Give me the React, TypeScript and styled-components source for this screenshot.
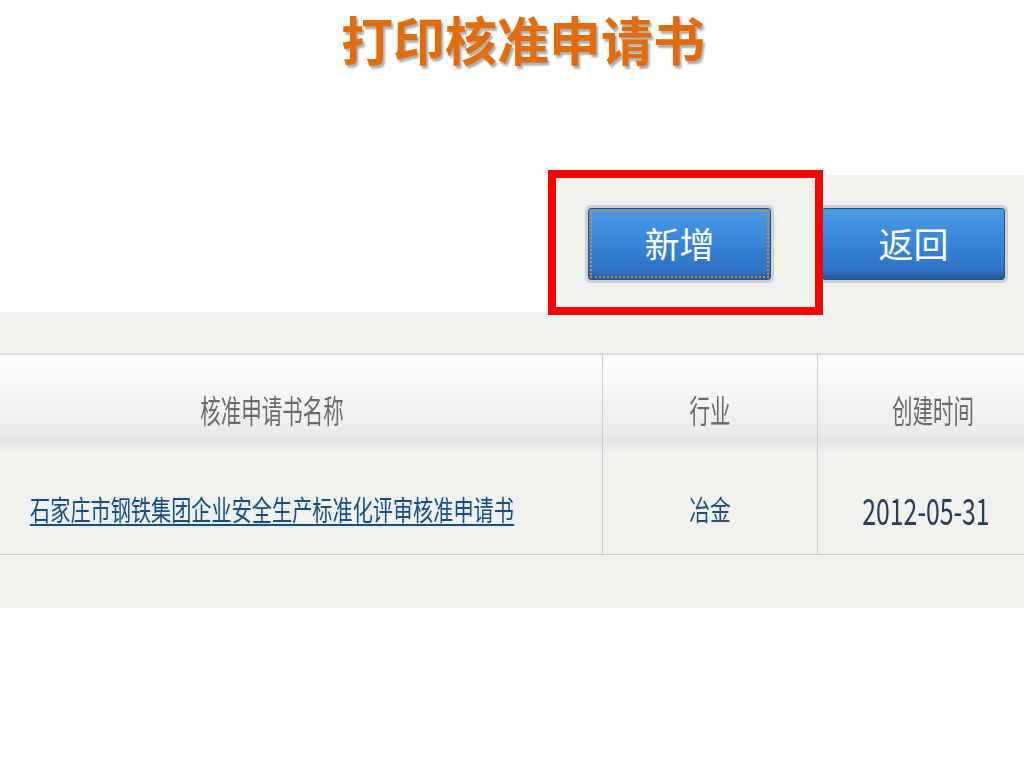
import React from "react";
import styled, { createGlobalStyle } from "styled-components";

const Global = createGlobalStyle`
  html, body { margin: 0; padding: 0; background: #ffffff; }
  body { width: 1024px; height: 768px; overflow: hidden; font-family: "Noto Sans CJK SC", "Noto Sans", sans-serif; }
`;

const Page = styled.div`
  width: 1024px;
  height: 768px;
  background: #ffffff;
  display: flex;
  flex-direction: column;
  overflow: hidden;
`;

const TitleBar = styled.div`
  height: 175px;
  display: flex;
  justify-content: center;
  align-items: flex-start;
  padding-left: 22px;
  box-sizing: border-box;
`;

const Title = styled.h1`
  margin: 0;
  padding-top: 4px;
  font-family: "Noto Sans CJK SC", sans-serif;
  font-size: 52px;
  font-weight: 700;
  line-height: 70px;
  color: #e36c0a;
  text-shadow: 2px 3px 2px rgba(110, 110, 110, 0.55);
  letter-spacing: 0;
`;

const ToolbarRow = styled.div`
  display: flex;
  justify-content: flex-end;
  height: 137px;
`;

const ToolbarPanel = styled.div`
  position: relative;
  width: 469px;
  background: #f1f1ee;
  display: flex;
  align-items: center;
  gap: 51px;
  padding-left: 33px;
  box-sizing: border-box;
`;

const Highlight = styled.div`
  position: absolute;
  left: -7px;
  top: -5px;
  width: 275px;
  height: 145px;
  border: 8px solid #ff0000;
  box-sizing: border-box;
  pointer-events: none;
`;

const Button = styled.button<{ $focused?: boolean }>`
  width: 183px;
  height: 72px;
  flex: none;
  border: 1px solid #22558f;
  border-radius: 3px;
  background: linear-gradient(#4a9be4 0%, #3a86d8 45%, #2f74c6 85%, #2a62a8 100%);
  box-shadow: 0 0 0 3px #cdd1d6, inset 0 -4px 0 #2a5d9c;
  color: #ffffff;
  font-family: "Noto Sans CJK SC", sans-serif;
  font-size: 35px;
  line-height: 1;
  padding: 0 0 2px 0;
  letter-spacing: 0;
  outline: ${(p) => (p.$focused ? "2px dotted #d0843a" : "none")};
  outline-offset: -4px;
  cursor: pointer;
`;

const Grid = styled.div`
  background: #f1f1ee;
  padding: 41px 0 53px 0;
  overflow: hidden;
`;

const Table = styled.div`
  margin-left: -58px;
  width: 1106px;
  display: grid;
  grid-template-columns: 661px 215px 230px;
`;

const HeadCell = styled.div<{ $last?: boolean }>`
  height: 100px;
  box-sizing: border-box;
  display: flex;
  align-items: center;
  justify-content: center;
  border-top: 1px solid #d6d6d6;
  border-right: ${(p) => (p.$last ? "none" : "1px solid #cfcfcf")};
  box-shadow: inset 0 3px 3px -2px rgba(0, 0, 0, 0.12);
  background: linear-gradient(#fdfdfd 0%, #f7f7f7 35%, #ebebeb 80%, #e6e6e6 88%, #f0f0ee 100%);
  color: #6b6b6b;
  font-size: 32px;
  padding-top: 10px;
`;

const BodyCell = styled.div<{ $last?: boolean }>`
  height: 102px;
  box-sizing: border-box;
  display: flex;
  align-items: center;
  justify-content: center;
  border-right: ${(p) => (p.$last ? "none" : "1px solid #cfcfcf")};
  border-bottom: 1px solid #c9c9c9;
  background: #f2f2ef;
  font-size: 28px;
  color: #2a4f73;
  padding-top: 10px;
  padding-right: ${(p) => (p.$last ? "14px" : "0")};
`;

const Squeeze = styled.span<{ $sx: number; $size?: number }>`
  display: inline-block;
  white-space: nowrap;
  transform: scaleX(${(p) => p.$sx});
  transform-origin: center;
  font-size: ${(p) => (p.$size ? `${p.$size}px` : "inherit")};
`;

const Link = styled.a`
  color: #1f4d78;
  text-decoration: underline;
  text-decoration-thickness: 2px;
  text-underline-offset: 3px;
  text-shadow: 0 0 3px #c4e8ff;
  cursor: pointer;
`;

const Plain = styled.span<{ $color: string }>`
  color: ${(p) => p.$color};
  text-shadow: 0 0 3px #d6ecff;
`;

export default function App() {
  return (
    <Page>
      <Global />
      <TitleBar>
        <Title>打印核准申请书</Title>
      </TitleBar>
      <ToolbarRow>
        <ToolbarPanel>
          <Highlight />
          <Button $focused>新增</Button>
          <Button>返回</Button>
        </ToolbarPanel>
      </ToolbarRow>
      <Grid>
        <Table>
          <HeadCell>
            <Squeeze $sx={0.64}>核准申请书名称</Squeeze>
          </HeadCell>
          <HeadCell>
            <Squeeze $sx={0.64}>行业</Squeeze>
          </HeadCell>
          <HeadCell $last>
            <Squeeze $sx={0.64}>创建时间</Squeeze>
          </HeadCell>
          <BodyCell>
            <Squeeze $sx={0.72}>
              <Link>石家庄市钢铁集团企业安全生产标准化评审核准申请书</Link>
            </Squeeze>
          </BodyCell>
          <BodyCell>
            <Squeeze $sx={0.74}>
              <Plain $color="#2a4f73">冶金</Plain>
            </Squeeze>
          </BodyCell>
          <BodyCell $last>
            <Squeeze $sx={0.67} $size={37}>
              <Plain $color="#2e3d52">2012-05-31</Plain>
            </Squeeze>
          </BodyCell>
        </Table>
      </Grid>
    </Page>
  );
}
